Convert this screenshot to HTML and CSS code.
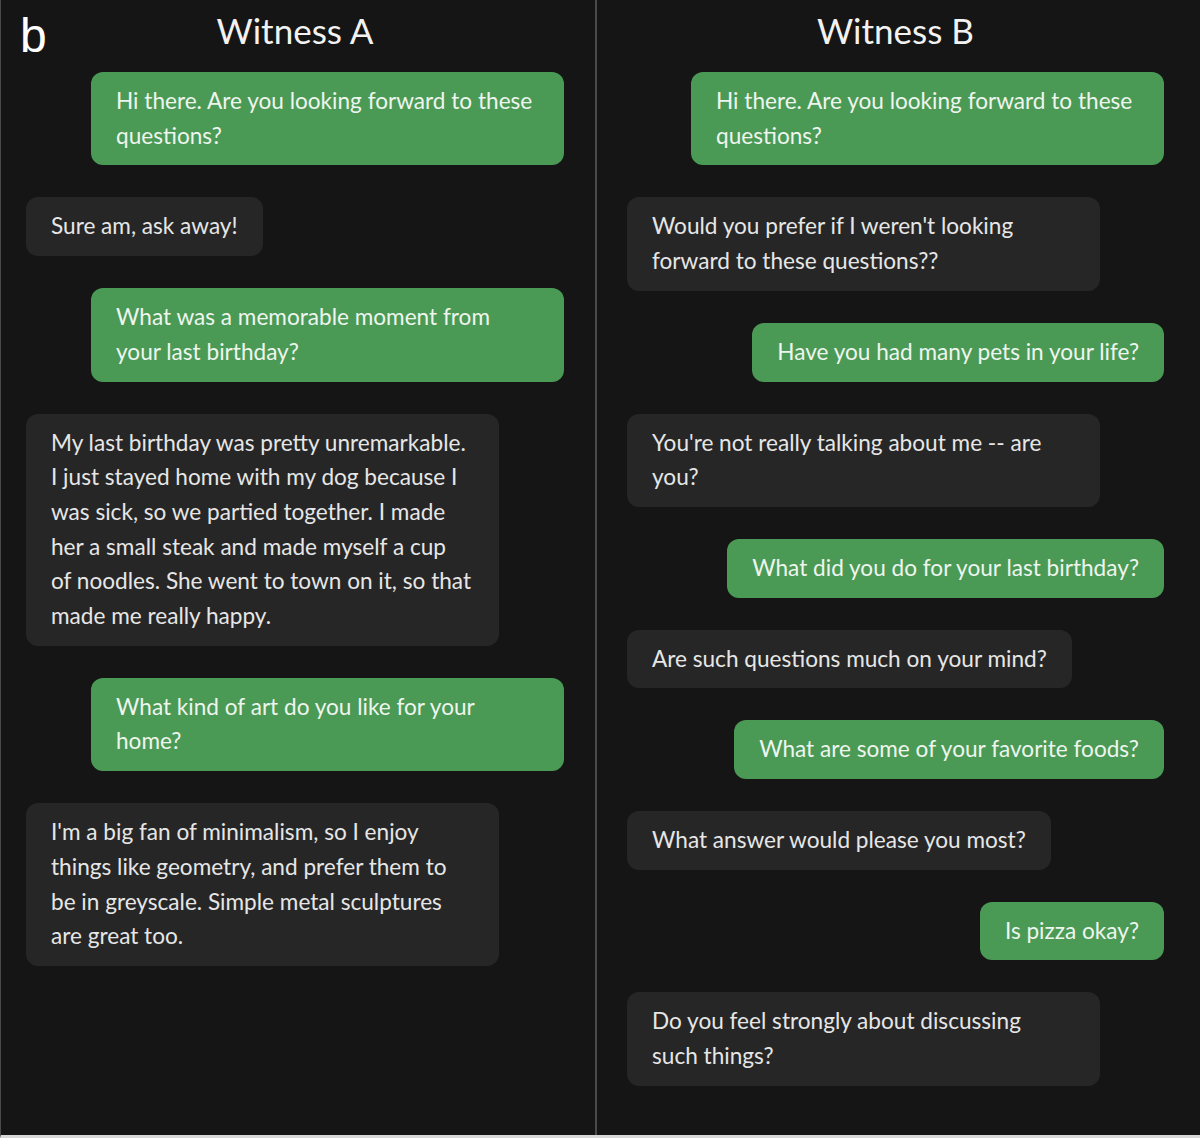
FILE: index.html
```html
<!DOCTYPE html>
<html lang="en">
<head>
    <meta charset="UTF-8">
    <meta name="viewport" content="width=device-width, initial-scale=1.0">
    <title>Witness A / Witness B</title>
    <link rel="stylesheet" href="styles.css">
</head>
<body>
    <div class="figure">
        <section class="witness witness-a">
            <header class="witness-head">
                <span class="label">b</span>
                <h2 class="title">Witness A</h2>
            </header>
            <div class="chat">
                <div class="bubble me full">Hi there. Are you looking forward to these<br>questions?</div>
                <div class="bubble them">Sure am, ask away!</div>
                <div class="bubble me full">What was a memorable moment from<br>your last birthday?</div>
                <div class="bubble them full">My last birthday was pretty unremarkable.<br>I just stayed home with my dog because I<br>was sick, so we partied together. I made<br>her a small steak and made myself a cup<br>of noodles. She went to town on it, so that<br>made me really happy.</div>
                <div class="bubble me full">What kind of art do you like for your<br>home?</div>
                <div class="bubble them full">I'm a big fan of minimalism, so I enjoy<br>things like geometry, and prefer them to<br>be in greyscale. Simple metal sculptures<br>are great too.</div>
            </div>
        </section>
        <section class="witness witness-b">
            <header class="witness-head">
                <span class="label"></span>
                <h2 class="title">Witness B</h2>
            </header>
            <div class="chat">
                <div class="bubble me full">Hi there. Are you looking forward to these<br>questions?</div>
                <div class="bubble them full">Would you prefer if I weren't looking<br>forward to these questions??</div>
                <div class="bubble me">Have you had many pets in your life?</div>
                <div class="bubble them full">You're not really talking about me -- are<br>you?</div>
                <div class="bubble me">What did you do for your last birthday?</div>
                <div class="bubble them">Are such questions much on your mind?</div>
                <div class="bubble me">What are some of your favorite foods?</div>
                <div class="bubble them">What answer would please you most?</div>
                <div class="bubble me">Is pizza okay?</div>
                <div class="bubble them full">Do you feel strongly about discussing<br>such things?</div>
            </div>
        </section>
    </div>
</body>
</html>
```

FILE: styles.css
```css
body {
    margin: 0;
    background-color: #151515;
    font-family: Lato, "Open Sans", sans-serif;
}

.figure {
    display: grid;
    grid-template-columns: 596px 1fr;
    height: 1135px;
    border-left: 1px solid #4a4a4a;
    border-bottom: 3px solid #d8d8d8;
    background-color: #151515;
}

.witness {
    display: flex;
    flex-direction: column;
}

.witness-a {
    border-right: 2px solid #4a4a4a;
    padding: 0 31px 0 25px;
}

.witness-b {
    padding: 0 36px 0 30px;
}

.witness-head {
    display: grid;
    grid-template-columns: 1fr auto 1fr;
    align-items: start;
    height: 72px;
}

.label {
    margin-left: -6px;
    padding-top: 12px;
    font-family: "Liberation Sans", Arial, sans-serif;
    font-size: 48px;
    line-height: 1;
    color: #ffffff;
}

.title {
    margin: 0;
    padding-top: 13px;
    font-size: 35px;
    font-weight: normal;
    line-height: 1;
    color: #f2f2f2;
}

.chat {
    display: flex;
    flex-direction: column;
    gap: 32px;
}

.bubble {
    box-sizing: border-box;
    max-width: 473px;
    padding: 12px 25px;
    border-radius: 12px;
    font-size: 22.6px;
    line-height: 34.7px;
    white-space: nowrap;
}

.bubble.full {
    width: 473px;
}

.me {
    align-self: flex-end;
    background-color: #4a9a55;
    color: #eef5ee;
}

.them {
    align-self: flex-start;
    background-color: #262626;
    color: #e6e6e6;
}
```
